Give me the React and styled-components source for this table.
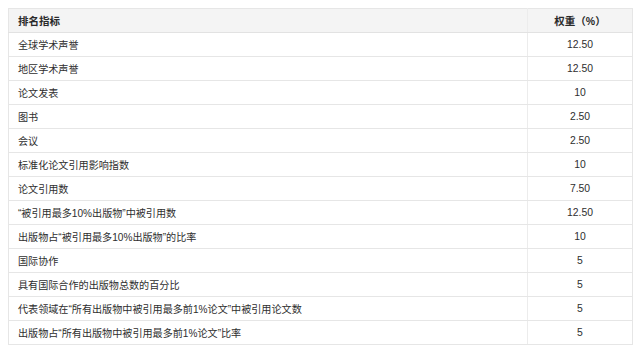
import React from "react";
import styled, { createGlobalStyle } from "styled-components";

const GlobalStyle = createGlobalStyle`
  html, body {
    margin: 0;
    padding: 0;
    background: #fff;
  }
  body {
    font-family: "Liberation Sans", "Noto Sans CJK SC", sans-serif;
    color: #333;
  }
`;

const Page = styled.div`
  width: 640px;
  height: 352px;
  overflow: hidden;
  padding: 8px 7px 0 8px;
  box-sizing: border-box;
`;

const Table = styled.table`
  width: 625px;
  border-collapse: collapse;
  border: 1px solid #e6e6e6;
  table-layout: fixed;
`;

const HeadRow = styled.tr`
  background: #f4f4f4;
`;

const Row = styled.tr`
  background: #fff;
`;

const HeadCell = styled.th`
  height: 23px;
  padding: 0 0 0 ${(p) => (p.$center ? "0" : "9px")};
  text-align: ${(p) => (p.$center ? "center" : "left")};
  font-size: 10.5px;
  font-weight: bold;
  color: #2a2a2a;
  border-bottom: 1px solid #e2e2e2;
  border-left: ${(p) => (p.$center ? "1px solid #ececec" : "none")};
  width: ${(p) => (p.$center ? "104px" : "auto")};
`;

const Cell = styled.td`
  height: 23px;
  padding: 0 0 0 ${(p) => (p.$center ? "0" : "9px")};
  text-align: ${(p) => (p.$center ? "center" : "left")};
  font-size: ${(p) => (p.$center ? "10.4px" : "10.1px")};
  color: #2e2e2e;
  border-bottom: 1px solid #e6e6e6;
  border-left: ${(p) => (p.$center ? "1px solid #ececec" : "none")};
  white-space: nowrap;
`;

const rows = [
  ["全球学术声誉", "12.50"],
  ["地区学术声誉", "12.50"],
  ["论文发表", "10"],
  ["图书", "2.50"],
  ["会议", "2.50"],
  ["标准化论文引用影响指数", "10"],
  ["论文引用数", "7.50"],
  ["\u201C被引用最多10%出版物\u201D中被引用数", "12.50"],
  ["出版物占\u201C被引用最多10%出版物\u201D的比率", "10"],
  ["国际协作", "5"],
  ["具有国际合作的出版物总数的百分比", "5"],
  ["代表领域在\u201C所有出版物中被引用最多前1%论文\u201D中被引用论文数", "5"],
  ["出版物占\u201C所有出版物中被引用最多前1%论文\u201D比率", "5"],
];

export default function App() {
  return (
    <>
      <GlobalStyle />
      <Page>
        <Table>
          <thead>
            <HeadRow>
              <HeadCell>排名指标</HeadCell>
              <HeadCell $center>权重（%）</HeadCell>
            </HeadRow>
          </thead>
          <tbody>
            {rows.map(([name, weight]) => (
              <Row key={name}>
                <Cell>{name}</Cell>
                <Cell $center>{weight}</Cell>
              </Row>
            ))}
          </tbody>
        </Table>
      </Page>
    </>
  );
}
